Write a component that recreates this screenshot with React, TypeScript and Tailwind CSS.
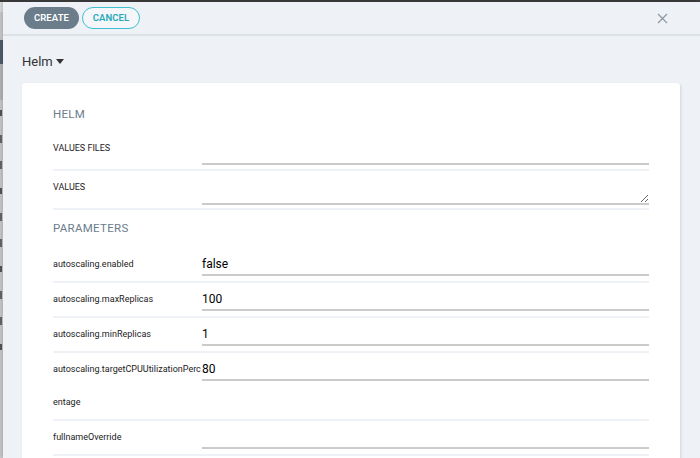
import React from 'react';

type Param = { name: string; value: string };

const params: Param[] = [
    { name: 'autoscaling.enabled', value: 'false' },
    { name: 'autoscaling.maxReplicas', value: '100' },
    { name: 'autoscaling.minReplicas', value: '1' },
    { name: 'autoscaling.targetCPUUtilizationPercentage', value: '80' },
    { name: 'fullnameOverride', value: '' },
];

export default function App() {
    return (
        <div className="h-[458px] w-[700px] overflow-hidden flex flex-col bg-[#eef1f5]"
             style={{ fontFamily: 'Roboto, "Noto Sans", sans-serif' }}>
            <div className="h-[2px] bg-[#3b3b3b] shrink-0" />
            <div className="flex flex-1 min-h-0">
                <LeftStrip />
                <div className="flex-1 flex flex-col shadow-[-2px_0_3px_rgba(0,0,0,0.12)]">
                    <div className="h-[34px] shrink-0 flex items-center pl-[21px] pr-[30px] border-b-2 border-[#dce1e6] bg-[#eef1f5]">
                        <button className="h-[22px] w-[55px] rounded-full bg-[#6b7c8b] text-white text-[9.5px] font-semibold tracking-[0.1px]">
                            CREATE
                        </button>
                        <button className="ml-[3px] h-[22px] w-[58px] rounded-full border-[1.5px] border-[#3dc1d0] text-[#27a9ba] text-[9.5px] font-semibold tracking-[0.1px] bg-white/40">
                            CANCEL
                        </button>
                        <div className="flex-1" />
                        <svg width="11" height="11" viewBox="0 0 11 11" className="mr-[2px]">
                            <path d="M1 1 L10 10 M10 1 L1 10" stroke="#8d99a5" strokeWidth="1.3" fill="none" />
                        </svg>
                    </div>

                    <div className="pl-[19px] pr-[20px] flex-1 min-h-0">
                        <div className="h-[47px] flex items-center text-[13px] text-[#333] gap-[3px] pt-[4px]">
                            Helm
                            <svg width="8" height="5" viewBox="0 0 8 5"><path d="M0 0 L8 0 L4 5 Z" fill="#333" /></svg>
                        </div>

                        <div className="bg-white rounded-[3px] shadow-[1px_1px_3px_rgba(0,0,0,0.12)] px-[31px] pb-[40px]">
                            <div className="pt-[23px] leading-[16px] text-[11.5px] text-[#6b7c8b] tracking-[0.3px]">HELM</div>

                            <div className="mt-[9px] h-[40px] flex border-b-2 border-[#eef1f5]">
                                <div className="w-[149px] shrink-0 leading-[35px] text-[9px] text-[#222] uppercase">Values Files</div>
                                <div className="flex-1 pt-[8px]">
                                    <input className="w-full h-[23px] border-b-2 border-[#cbcbcb] outline-none text-[12px]" />
                                </div>
                            </div>

                            <div className="h-[39px] flex border-b-2 border-[#eef1f5]">
                                <div className="w-[149px] shrink-0 leading-[33px] text-[9px] text-[#222] uppercase">Values</div>
                                <div className="flex-1 pt-[9px]">
                                    <textarea rows={1} className="block w-full h-[25px] border-b-2 border-[#cbcbcb] outline-none text-[12px]" />
                                </div>
                            </div>

                            <div className="mt-[10px] mb-[12px] leading-[16px] text-[11.5px] text-[#6b7c8b] tracking-[0.3px]">PARAMETERS</div>

                            {params.map(p => (
                                <div key={p.name} className="flex items-start border-b-2 border-[#eef1f5]">
                                    <div className="w-[149px] shrink-0 leading-[33px] text-[9px] text-[#222] break-all">{p.name}</div>
                                    <div className="flex-1 pt-[3px]">
                                        <input defaultValue={p.value}
                                               className="w-full h-[22px] border-b-2 border-[#cbcbcb] outline-none text-[12px] text-black" />
                                    </div>
                                </div>
                            ))}
                        </div>
                    </div>
                </div>
            </div>
        </div>
    );
}

function LeftStrip() {
    const marks = [110, 138, 165, 188, 250, 285, 312, 340, 365, 390];
    return (
        <div className="w-[3px] shrink-0 bg-[#c9c9c9] flex flex-col">
            <div className="h-[10px] bg-[#dcdcdc]" />
            <div className="h-[28px]" />
            <div className="h-[24px] bg-[#4e5d69]" />
            <div className="h-[36px] bg-[#b5b5b5]" />
            {marks.map((m, i) => (
                <div key={m} className="h-[26px] flex items-center">
                    <div className={i % 3 === 0 ? 'h-[6px] w-[2px] bg-[#555]' : 'h-[8px] w-[2px] bg-[#666]'} />
                </div>
            ))}
        </div>
    );
}
